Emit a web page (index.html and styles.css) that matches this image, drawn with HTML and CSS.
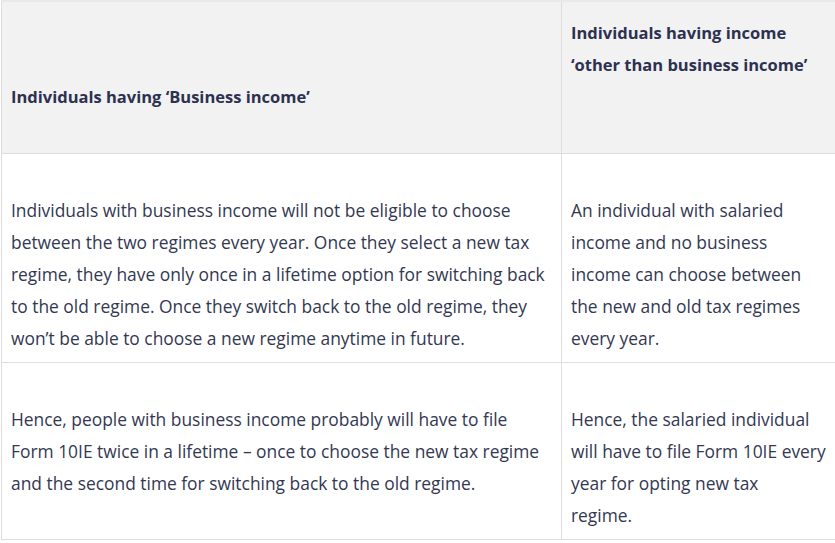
FILE: index.html
```html
<!DOCTYPE html>
<html>
<head>
<meta charset="utf-8">
<link rel="stylesheet" href="styles.css">
</head>
<body>
<table class="tax-table">
  <colgroup><col class="col-a"><col class="col-b"></colgroup>
  <tr class="head-row">
    <th class="head-a">Individuals having ‘Business income’</th>
    <th class="head-b">Individuals having income<br>‘other than business income’</th>
  </tr>
  <tr class="row-1">
    <td>Individuals with business income will not be eligible to choose<br>between the two regimes every year. Once they select a new tax<br>regime, they have only once in a lifetime option for switching back<br>to the old regime. Once they switch back to the old regime, they<br>won’t be able to choose a new regime anytime in future.</td>
    <td>An individual with salaried<br>income and no business<br>income can choose between<br>the new and old tax regimes<br>every year.</td>
  </tr>
  <tr class="row-2">
    <td>Hence, people with business income probably will have to file<br>Form 10IE twice in a lifetime – once to choose the new tax regime<br>and the second time for switching back to the old regime.</td>
    <td>Hence, the salaried individual<br>will have to file Form 10IE every<br>year for opting new tax<br>regime.</td>
  </tr>
</table>
</body>
</html>
```
FILE: styles.css
```css
html, body {
  margin: 0;
  padding: 0;
  background: #ffffff;
}
body {
  padding-left: 1px;
}
.tax-table {
  border-collapse: collapse;
  table-layout: fixed;
  width: 834px;
  font-family: "Open Sans", "Noto Sans", sans-serif;
  color: #333852;
}
.col-a { width: 560px; }
.col-b { width: 274px; }
.tax-table th,
.tax-table td {
  border: 1px solid #dddddd;
  text-align: left;
  vertical-align: top;
  white-space: nowrap;
  padding: 0 0 0 9px;
}
.tax-table th {
  background: #f2f2f2;
  font-weight: 700;
  font-size: 16.5px;
  line-height: 32px;
  color: #2c3150;
  height: 152px;
  box-sizing: border-box;
  border-top: 2px solid #e9e9e9;
}
.tax-table .head-a { padding-top: 79px; }
.tax-table .head-b { padding-top: 15px; }
.tax-table td {
  font-size: 17.4px;
  line-height: 32px;
  padding-top: 40px;
  padding-bottom: 8px;
}
```
